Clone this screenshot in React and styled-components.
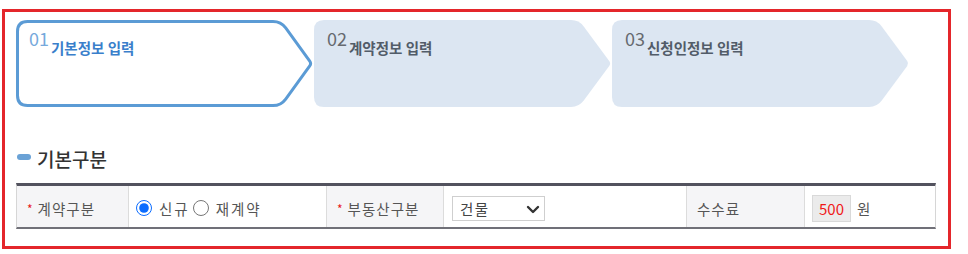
import React from "react";
import styled, { createGlobalStyle } from "styled-components";

const Global = createGlobalStyle`
  html, body { margin: 0; padding: 0; background: #fff; }
  body { font-family: "Noto Sans CJK KR", "Noto Sans", sans-serif; }
  * { box-sizing: border-box; }
`;

const Frame = styled.div`
  margin: 9px 0 0 2px;
  width: 949px;
  border: 3px solid #e4262b;
  padding: 8px 12px 17px 11px;
`;

const Steps = styled.div`
  display: flex;
  gap: 1px;
`;

const Step = styled.div`
  position: relative;
  width: 297px;
  height: 87px;
  padding: 9px 0 0 13px;
`;

const StepShape = styled.svg`
  position: absolute;
  inset: 0;
  width: 100%;
  height: 100%;
`;

const StepTitle = styled.div`
  position: relative;
  display: flex;
  align-items: flex-start;
`;

const StepNum = styled.span`
  font-size: 18px;
  line-height: 1;
  color: ${(p) => (p.$active ? "#76a9dc" : "#666a70")};
  margin-right: 2px;
`;

const StepLabel = styled.span`
  margin-top: 12px;
  font-size: 14.5px;
  line-height: 1;
  font-weight: 700;
  color: ${(p) => (p.$active ? "#3a7fcb" : "#525c69")};
`;

const SectionHead = styled.div`
  display: flex;
  align-items: center;
  margin: 42px 0 15px 1px;
`;

const Bullet = styled.span`
  width: 14px;
  height: 6px;
  border-radius: 3px;
  background: #6aa2d6;
  margin: 0 6px 0 0;
  position: relative;
  top: -2px;
`;

const SectionTitle = styled.h2`
  margin: 0;
  font-size: 19px;
  line-height: 1;
  font-weight: 500;
  color: #333;
`;

const Table = styled.div`
  display: grid;
  grid-template-columns: 111px 198px 117px 243px 118px 131px;
  width: 920px;
  border-top: 3px solid #52525e;
  border-bottom: 2px solid #707078;
  border-left: 1px solid #d6d6d6;
  border-right: 1px solid #d6d6d6;
`;

const Cell = styled.div`
  height: 41px;
  display: flex;
  align-items: center;
  padding-top: 3px;
  border-left: ${(p) => (p.$first ? "none" : "1px solid #dcdcdc")};
  font-size: 14.5px;
  letter-spacing: 1px;
`;

const Th = styled(Cell)`
  background: #f5f5f7;
  padding-left: 10px;
  color: #555;
`;

const Td = styled(Cell)`
  padding-left: ${(p) => p.$pl || 8}px;
  color: #555;
  letter-spacing: ${(p) => p.$ls ?? 1}px;
`;

const Req = styled.span`
  color: #e8191d;
  font-size: 12px;
  margin-right: 5px;
  letter-spacing: 0;
`;

const RadioLabel = styled.label`
  display: inline-flex;
  align-items: center;
  margin-right: 3px;
`;

const Radio = styled.input`
  width: 16px;
  height: 16px;
  margin: 0 7px 0 0;
  accent-color: #0a6cff;
`;

const SelectWrap = styled.div`
  position: relative;
  width: 93px;
  height: 25px;
`;

const Select = styled.select`
  appearance: none;
  width: 100%;
  height: 100%;
  border: 1px solid #cfcfcf;
  background: #fff;
  padding: 0 0 0 7px;
  font-family: inherit;
  font-size: 14.5px;
  letter-spacing: 1.5px;
  color: #444;
`;

const Chevron = styled.svg`
  position: absolute;
  right: 5px;
  top: 9px;
  width: 14px;
  height: 9px;
  pointer-events: none;
`;

const Fee = styled.span`
  display: inline-flex;
  align-items: center;
  justify-content: center;
  width: 39px;
  height: 27px;
  background: #ebebeb;
  border: 1px solid #d9d9d9;
  color: #f01818;
  font-size: 15px;
  letter-spacing: 0;
  margin-right: 6px;
`;

function roundedPath(points, radii) {
  const n = points.length;
  let d = "";
  for (let k = 0; k < n; k++) {
    const P = points[k];
    const A = points[(k - 1 + n) % n];
    const B = points[(k + 1) % n];
    const r = radii[k];
    const la = Math.hypot(A[0] - P[0], A[1] - P[1]);
    const lb = Math.hypot(B[0] - P[0], B[1] - P[1]);
    const p1 = [P[0] + ((A[0] - P[0]) * r) / la, P[1] + ((A[1] - P[1]) * r) / la];
    const p2 = [P[0] + ((B[0] - P[0]) * r) / lb, P[1] + ((B[1] - P[1]) * r) / lb];
    d += (k === 0 ? "M" : "L") + p1[0].toFixed(2) + " " + p1[1].toFixed(2);
    d += " Q" + P[0] + " " + P[1] + " " + p2[0].toFixed(2) + " " + p2[1].toFixed(2) + " ";
  }
  return d + "Z";
}

function StepBg({ active }) {
  const w = 297,
    h = 87,
    dep = 32,
    i = active ? 1.5 : 0;
  const pts = [
    [i, i],
    [w - dep, i],
    [w - i, h / 2],
    [w - dep, h - i],
    [i, h - i],
  ];
  const d = roundedPath(pts, [10, 8, 3, 8, 10]);
  return (
    <StepShape viewBox={`0 0 ${w} ${h}`} preserveAspectRatio="none">
      {active ? (
        <path d={d} fill="#fff" stroke="#5b9bd5" strokeWidth="3" strokeLinejoin="round" />
      ) : (
        <path d={d} fill="#dce6f2" />
      )}
    </StepShape>
  );
}

const steps = [
  { num: "01", label: "기본정보 입력", active: true },
  { num: "02", label: "계약정보 입력" },
  { num: "03", label: "신청인정보 입력" },
];

export default function App() {
  return (
    <>
      <Global />
      <Frame>
        <Steps>
          {steps.map((s) => (
            <Step key={s.num}>
              <StepBg active={s.active} />
              <StepTitle>
                <StepNum $active={s.active}>{s.num}</StepNum>
                <StepLabel $active={s.active}>{s.label}</StepLabel>
              </StepTitle>
            </Step>
          ))}
        </Steps>

        <SectionHead>
          <Bullet />
          <SectionTitle>기본구분</SectionTitle>
        </SectionHead>

        <Table>
          <Th $first>
            <Req>*</Req>계약구분
          </Th>
          <Td $pl={7} $ls={2}>
            <RadioLabel>
              <Radio type="radio" name="ctype" defaultChecked />
              신규
            </RadioLabel>
            <RadioLabel>
              <Radio type="radio" name="ctype" />
              재계약
            </RadioLabel>
          </Td>
          <Th>
            <Req>*</Req>부동산구분
          </Th>
          <Td>
            <SelectWrap>
              <Select defaultValue="건물">
                <option>건물</option>
                <option>토지</option>
              </Select>
              <Chevron viewBox="0 0 14 9">
                <path d="M2 2 L7 7 L12 2" fill="none" stroke="#333" strokeWidth="2.4" strokeLinecap="round" strokeLinejoin="round" />
              </Chevron>
            </SelectWrap>
          </Td>
          <Th>수수료</Th>
          <Td $pl={7}>
            <Fee>500</Fee>원
          </Td>
        </Table>
      </Frame>
    </>
  );
}
